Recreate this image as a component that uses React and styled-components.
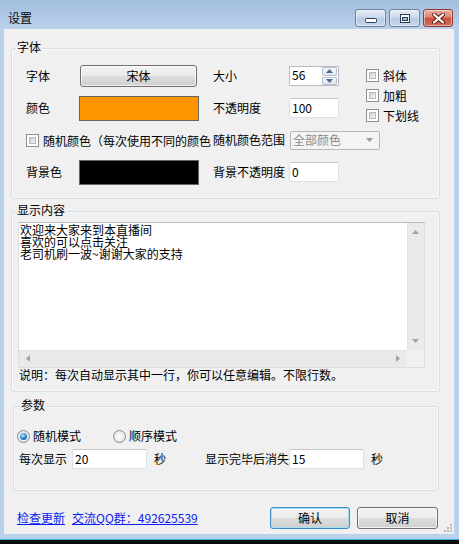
import React from 'react';
import styled, { createGlobalStyle, css } from 'styled-components';

const GlobalStyle = createGlobalStyle`
  html, body { margin: 0; padding: 0; background: #0b0b0b; }
  body {
    width: 459px; height: 544px; overflow: hidden;
    font-family: "Noto Sans CJK SC", "Noto Sans", sans-serif;
    font-size: 12px; color: #000;
  }
  * { box-sizing: border-box; }
`;

const gridPos = css`
  grid-column: ${p => p.$col || 'auto'};
  grid-row: ${p => p.$row || 'auto'};
`;

const Window = styled.div`
  width: 459px;
  height: 540px;
  background: #b9d1ea;
  border-bottom: 1px solid #36b1de;
  display: flex;
  flex-direction: column;
`;

const TitleBar = styled.div`
  height: 29px;
  flex: none;
  display: flex;
  align-items: flex-start;
  padding: 9px 6px 0 8px;
  background: linear-gradient(#a3bedd, #b9d1ea);
`;

const Title = styled.div`
  margin-top: 1px;
  line-height: 15px;
  color: #0a0a0a;
`;

const CaptionButtons = styled.div`
  margin-left: auto;
  display: flex;
  gap: 3px;
`;

const CaptionButton = styled.div`
  width: ${p => (p.$close ? 30 : 31)}px;
  height: 18px;
  border-radius: 3px;
  border: 1px solid ${p => (p.$close ? '#8b3b30' : '#6e7f98')};
  background: ${p =>
    p.$close
      ? 'linear-gradient(#eab0a2 0%, #dc8372 45%, #c9503b 50%, #d56b5a 100%)'
      : 'linear-gradient(#e3ecf7 0%, #cbdaee 45%, #b7cae4 50%, #c6d7ec 100%)'};
  box-shadow: inset 0 0 0 1px rgba(255, 255, 255, 0.45);
  display: flex;
  align-items: ${p => p.$align || 'center'};
  justify-content: center;
  padding-bottom: ${p => p.$pb || 0}px;
`;

const Client = styled.div`
  flex: 1;
  margin: 0 5px 5px 4px;
  background: #f0f0f0;
  display: flex;
  flex-direction: column;
  padding-top: 19px;
`;

const GroupBox = styled.div`
  position: relative;
  margin-left: ${p => p.$left}px;
  margin-top: ${p => p.$top || 0}px;
  width: ${p => p.$width}px;
  border: 1px solid #d5dfe5;
  border-radius: 3px;
  box-shadow: inset 0 0 0 1px rgba(255, 255, 255, 0.6);
`;

const GroupTitle = styled.span`
  position: absolute;
  top: -9px;
  left: ${p => p.$left || 4}px;
  padding: 0 1px;
  line-height: 13px;
  background: #f0f0f0;
  white-space: nowrap;
`;

const FontGrid = styled.div`
  display: grid;
  grid-template-columns: 53px 120px 14px 76px 77px 1fr;
  grid-template-rows: repeat(4, 32px);
  padding: 11px 0 10px 14px;
  align-items: center;
`;

const Label = styled.span`
  line-height: 14px;
  white-space: nowrap;
  ${gridPos}
`;

const PushButton = styled.div`
  width: ${p => p.$w}px;
  height: 22px;
  margin-left: ${p => p.$ml || 0}px;
  border: 1px solid ${p => (p.$default ? '#3c8ccb' : '#707070')};
  border-radius: 3px;
  background: linear-gradient(#f2f2f2 0%, #ebebeb 50%, #dddddd 51%, #cfcfcf 100%);
  box-shadow: inset 0 0 0 1px ${p => (p.$default ? '#a7dcf7' : 'rgba(255,255,255,0.7)')};
  display: flex;
  align-items: center;
  justify-content: center;
  line-height: 14px;
  justify-self: start;
  ${gridPos}
`;

const Swatch = styled.div`
  width: 120px;
  height: 25px;
  background: ${p => p.$color};
  border: 1px solid #646464;
  ${gridPos}
`;

const Field = styled.div`
  width: ${p => p.$w}px;
  height: 20px;
  margin-left: ${p => p.$ml || 0}px;
  background: #fff;
  border: 1px solid #dcdfe4;
  border-top-color: #c3c6cb;
  border-radius: 2px;
  padding: 0 2px;
  display: flex;
  align-items: center;
  line-height: 14px;
  justify-self: start;
  ${gridPos}
`;

const SpinBox = styled(Field)`
  padding-right: 1px;
  border-color: #b8bcc2;
  border-radius: 0;
`;

const SpinText = styled.span`
  flex: 1;
  margin-top: -2px;
`;

const SpinButtons = styled.div`
  width: 15px;
  height: 18px;
  display: flex;
  flex-direction: column;
  gap: 1px;
`;

const SpinButton = styled.div`
  flex: 1;
  border: 1px solid #b9c3cf;
  border-radius: 1px;
  background: linear-gradient(#f5f8fb, #dde5ee);
  display: flex;
  align-items: center;
  justify-content: center;
`;

const CheckStack = styled.div`
  grid-column: 6;
  grid-row: 1 / span 2;
  align-self: start;
  margin-top: 5px;
  display: flex;
  flex-direction: column;
`;

const CheckRow = styled.label`
  display: flex;
  align-items: center;
  gap: 4px;
  height: 20px;
  white-space: nowrap;
  ${gridPos}
`;

const CheckBox = styled.span`
  flex: none;
  width: 13px;
  height: 13px;
  border: 1px solid #8e8f8f;
  background: #fff;
  padding: 2px;
  display: flex;
`;

const CheckFill = styled.span`
  flex: 1;
  border: 1px solid #b5b9be;
  background: linear-gradient(135deg, #c8ccd2 0%, #e4e6e9 60%, #f6f6f6 100%);
`;

const Dropdown = styled.div`
  grid-column: 5 / span 2;
  grid-row: 3;
  justify-self: start;
  margin-left: 1px;
  width: 90px;
  height: 19px;
  border: 1px solid #b3b7bb;
  border-radius: 2px;
  background: #f4f4f4;
  color: #8a8a8a;
  display: flex;
  align-items: center;
  padding: 0 6px 0 2px;
  line-height: 14px;
`;

const DropArrow = styled.span`
  margin-left: auto;
  display: flex;
`;

const ContentBody = styled.div`
  padding: 10px 0 9px 6px;
`;

const TextBox = styled.div`
  width: 407px;
  height: 146px;
  border: 1px solid #dadde2;
  border-top-color: #b7bac0;
  background: #fff;
  display: grid;
  grid-template-columns: 1fr 17px;
  grid-template-rows: 1fr 17px;
`;

const TextContent = styled.div`
  padding: 1px 1px;
  line-height: 12px;
  white-space: pre;
  overflow: hidden;
`;

const ScrollTrack = styled.div`
  background: #eaeaea;
  display: flex;
  flex-direction: ${p => (p.$vertical ? 'column' : 'row')};
  align-items: center;
  justify-content: space-between;
  padding: ${p => (p.$vertical ? '7px 0 7px' : '0 7px')};
  box-shadow: ${p => (p.$vertical ? 'inset 1px 0 0 #e2e2e2' : 'inset 0 1px 0 #e2e2e2')};
`;

const ScrollCorner = styled.div`
  background: #f0f0f0;
`;

const Note = styled.div`
  padding-left: 1px;
  line-height: 14px;
  white-space: nowrap;
`;

const ParamBody = styled.div`
  padding: 21px 0 21px 3px;
  display: flex;
  flex-direction: column;
  gap: 5px;
`;

const RadioRow = styled.div`
  display: flex;
  align-items: center;
  gap: 32px;
  height: 16px;
`;

const RadioItem = styled.label`
  display: flex;
  align-items: center;
  gap: 3px;
  line-height: 14px;
`;

const Radio = styled.span`
  width: 13px;
  height: 13px;
  border-radius: 50%;
  border: 1px solid #8d8d8d;
  background: radial-gradient(circle at 50% 50%, #ffffff 0%, #ededed 55%, #cdcdcd 100%);
  display: flex;
  align-items: center;
  justify-content: center;
  &::after {
    content: '';
    display: ${p => (p.$checked ? 'block' : 'none')};
    width: 7px;
    height: 7px;
    border-radius: 50%;
    background: radial-gradient(circle at 40% 35%, #bfe8fc 0%, #2a8ad0 50%, #0c4c86 100%);
  }
`;

const FieldRow = styled.div`
  display: flex;
  align-items: center;
  padding-left: 2px;
`;

const InlineLabel = styled.span`
  margin-left: ${p => p.$ml || 0}px;
  line-height: 14px;
  white-space: nowrap;
`;

const Footer = styled.div`
  margin-top: 16px;
  height: 22px;
  display: flex;
  align-items: center;
  padding: 0 16px 0 13px;
  position: relative;
`;

const Link = styled.a`
  color: #0a1cf0;
  text-decoration: underline;
  line-height: 14px;
  margin-right: 7px;
  white-space: nowrap;
  cursor: pointer;
`;

const FooterButtons = styled.div`
  margin-left: auto;
  display: flex;
  gap: 7px;
`;

const SizeGrip = styled.svg`
  position: absolute;
  right: 2px;
  bottom: -3px;
`;

const Tri = ({ dir, color = '#a3a3a3', w = 7, h = 4 }) => {
  const pts = {
    up: `0,${h} ${w / 2},0 ${w},${h}`,
    down: `0,0 ${w / 2},${h} ${w},0`,
    left: `${h},0 0,${w / 2} ${h},${w}`,
    right: `0,0 ${h},${w / 2} 0,${w}`,
  }[dir];
  const vw = dir === 'left' || dir === 'right' ? h : w;
  const vh = dir === 'left' || dir === 'right' ? w : h;
  return (
    <svg width={vw} height={vh} viewBox={`0 0 ${vw} ${vh}`}>
      <polygon points={pts} fill={color} />
    </svg>
  );
};

export default function App() {
  return (
    <>
      <GlobalStyle />
      <Window>
        <TitleBar>
          <Title>设置</Title>
          <CaptionButtons>
            <CaptionButton $align="flex-end" $pb={3}>
              <svg width="12" height="5" viewBox="0 0 12 5">
                <rect x="0.5" y="0.5" width="11" height="4" rx="1" fill="#fff" stroke="#2c3b55" />
              </svg>
            </CaptionButton>
            <CaptionButton>
              <svg width="10" height="9" viewBox="0 0 10 9">
                <rect x="0.5" y="0.5" width="9" height="8" fill="#fff" stroke="#2c3b55" />
                <rect x="2.5" y="3.5" width="5" height="3" fill="#a9bcd4" stroke="#2c3b55" />
              </svg>
            </CaptionButton>
            <CaptionButton $close>
              <svg width="13" height="11" viewBox="0 0 13 11">
                <path d="M2 1.5 L11 9.5 M11 1.5 L2 9.5" stroke="#5a1d16" strokeWidth="4" strokeLinecap="round" />
                <path d="M2 1.5 L11 9.5 M11 1.5 L2 9.5" stroke="#ffffff" strokeWidth="2.2" strokeLinecap="round" />
              </svg>
            </CaptionButton>
          </CaptionButtons>
        </TitleBar>

        <Client>
          <GroupBox $left={7} $width={429}>
            <GroupTitle $left={4}>字体</GroupTitle>
            <FontGrid>
              <Label $col={1} $row={1}>字体</Label>
              <PushButton $col={2} $row={1} $w={117} $ml={1}>宋体</PushButton>
              <Label $col={4} $row={1}>大小</Label>
              <SpinBox $col={5} $row={1} $w={50}>
                <SpinText>56</SpinText>
                <SpinButtons>
                  <SpinButton><Tri dir="up" color="#4d6a96" w={7} h={4} /></SpinButton>
                  <SpinButton><Tri dir="down" color="#4d6a96" w={7} h={4} /></SpinButton>
                </SpinButtons>
              </SpinBox>
              <CheckStack>
                <CheckRow><CheckBox><CheckFill /></CheckBox>斜体</CheckRow>
                <CheckRow><CheckBox><CheckFill /></CheckBox>加粗</CheckRow>
                <CheckRow><CheckBox><CheckFill /></CheckBox>下划线</CheckRow>
              </CheckStack>

              <Label $col={1} $row={2}>颜色</Label>
              <Swatch $col={2} $row={2} $color="#ff9500" />
              <Label $col={4} $row={2}>不透明度</Label>
              <Field $col={5} $row={2} $w={50}>100</Field>

              <CheckRow $col="1 / span 3" $row={3}><CheckBox><CheckFill /></CheckBox>随机颜色（每次使用不同的颜色</CheckRow>
              <Label $col={4} $row={3}>随机颜色范围</Label>
              <Dropdown>
                全部颜色
                <DropArrow><Tri dir="down" color="#9a9a9a" w={7} h={4} /></DropArrow>
              </Dropdown>

              <Label $col={1} $row={4}>背景色</Label>
              <Swatch $col={2} $row={4} $color="#000000" />
              <Label $col={4} $row={4}>背景不透明度</Label>
              <Field $col={5} $row={4} $w={50}>0</Field>
            </FontGrid>
          </GroupBox>

          <GroupBox $left={7} $width={429} $top={12}>
            <GroupTitle $left={4}>显示内容</GroupTitle>
            <ContentBody>
              <TextBox>
                <TextContent>{'欢迎来大家来到本直播间\n喜欢的可以点击关注\n老司机刷一波~谢谢大家的支持'}</TextContent>
                <ScrollTrack $vertical>
                  <Tri dir="up" />
                  <Tri dir="down" />
                </ScrollTrack>
                <ScrollTrack>
                  <Tri dir="left" />
                  <Tri dir="right" />
                </ScrollTrack>
                <ScrollCorner />
              </TextBox>
              <Note>说明：每次自动显示其中一行，你可以任意编辑。不限行数。</Note>
            </ContentBody>
          </GroupBox>

          <GroupBox $left={9} $width={426} $top={14}>
            <GroupTitle $left={6}>参数</GroupTitle>
            <ParamBody>
              <RadioRow>
                <RadioItem><Radio $checked />随机模式</RadioItem>
                <RadioItem><Radio />顺序模式</RadioItem>
              </RadioRow>
              <FieldRow>
                <InlineLabel>每次显示</InlineLabel>
                <Field $w={75} $ml={5}>20</Field>
                <InlineLabel $ml={7}>秒</InlineLabel>
                <InlineLabel $ml={39}>显示完毕后消失</InlineLabel>
                <Field $w={75}>15</Field>
                <InlineLabel $ml={7}>秒</InlineLabel>
              </FieldRow>
            </ParamBody>
          </GroupBox>

          <Footer>
            <Link>检查更新</Link>
            <Link>交流QQ群：492625539</Link>
            <FooterButtons>
              <PushButton $w={80} $default>确认</PushButton>
              <PushButton $w={81}>取消</PushButton>
            </FooterButtons>
            <SizeGrip width="8" height="8" viewBox="0 0 8 8">
              <rect x="6" y="0" width="2" height="2" fill="#b8b8b8" />
              <rect x="3" y="3" width="2" height="2" fill="#b8b8b8" />
              <rect x="6" y="3" width="2" height="2" fill="#b8b8b8" />
              <rect x="0" y="6" width="2" height="2" fill="#b8b8b8" />
              <rect x="3" y="6" width="2" height="2" fill="#b8b8b8" />
              <rect x="6" y="6" width="2" height="2" fill="#b8b8b8" />
            </SizeGrip>
          </Footer>
        </Client>
      </Window>
    </>
  );
}
